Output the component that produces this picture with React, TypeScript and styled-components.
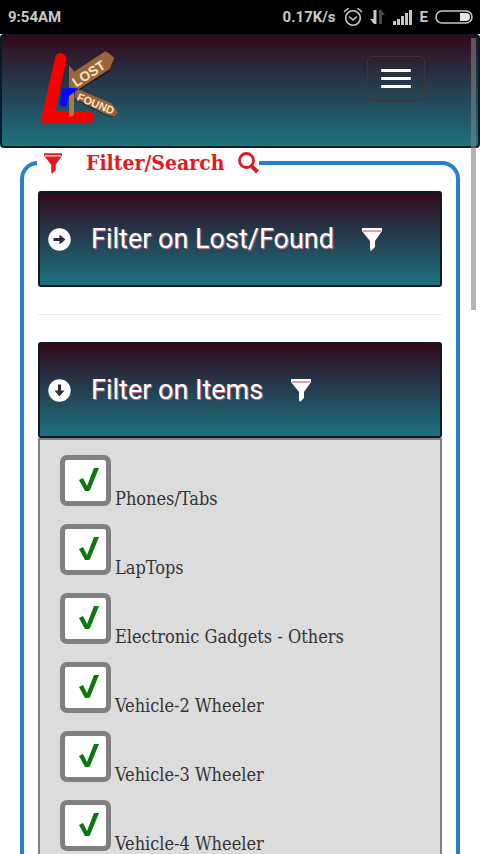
import React, { useState } from "react";
import styled, { createGlobalStyle } from "styled-components";

const serif = `"DejaVu Serif Condensed", "DejaVu Serif", serif`;
const sans = `Roboto, "Liberation Sans", sans-serif`;

const GlobalStyle = createGlobalStyle`
  *, *::before, *::after { box-sizing: border-box; }
  body { margin: 0; background: #fff; }
`;

const Screen = styled.div`
  position: relative;
  display: flex;
  flex-direction: column;
  height: 100vh;
  overflow: hidden;
  font-family: ${serif};
  color: #333;
`;

const StatusBar = styled.header`
  flex: none;
  display: flex;
  align-items: center;
  justify-content: space-between;
  height: 34px;
  padding: 0 7px 0 8px;
  background: #000;
  color: #c8c8c8;
  font: 700 15px/20px ${sans};
`;

const StatusGroup = styled.div`
  display: flex;
  align-items: center;
  gap: 7px;
`;

const ScrollArea = styled.div`
  flex: 1;
  min-height: 0;
  overflow-y: auto;
  scrollbar-width: none;
`;

const ScrollThumb = styled.div`
  position: absolute;
  top: 38px;
  right: 4px;
  width: 5px;
  height: 272px;
  background: rgba(128, 128, 128, 0.6);
`;

const gradient = `linear-gradient(#330a1a, #263547 40%, #1e727f)`;

const NavBar = styled.nav`
  display: flex;
  align-items: flex-start;
  justify-content: space-between;
  height: 114px;
  padding: 15px 53px 0 37px;
  border: 2px solid #071c2a;
  border-radius: 4px;
  background: ${gradient};
`;

const MenuButton = styled.button`
  display: flex;
  flex-direction: column;
  align-items: center;
  justify-content: center;
  gap: 5px;
  width: 58px;
  height: 45px;
  margin-top: 5px;
  padding: 0;
  border: 1px solid #3b3439;
  border-radius: 5px;
  background: transparent;
`;

const MenuBar = styled.span`
  width: 30px;
  height: 3px;
  border-radius: 1px;
  background: #fff;
`;

const Frame = styled.fieldset`
  min-width: 0;
  margin: 1px 20px 0;
  padding: 14px;
  border: 4px solid #2482c8;
  border-bottom-width: 0;
  border-radius: 18px 18px 0 0;
`;

const FrameTitle = styled.legend`
  display: flex;
  align-items: center;
  height: 28px;
  margin-left: -1px;
  padding: 0 0 0 7px;
  color: #e01b1f;
  font-size: 21px;
  font-weight: 700;
  line-height: 28px;
`;

const TitleText = styled.span`
  margin: 0 14px 0 24px;
`;

const PanelButton = styled.button`
  display: flex;
  align-items: center;
  width: 100%;
  height: 96px;
  padding: 0 8px;
  border: 2px solid #0a1a27;
  border-radius: 3px;
  background: ${gradient};
  color: #fff;
  font: 400 27px/36px ${sans};
  text-shadow: 1px 1px 1px #d9788a;
`;

const PanelText = styled.span`
  margin: 0 28px 0 20px;
`;

const Divider = styled.hr`
  height: 1px;
  margin: 27px 0;
  border: 0;
  background: #ececec;
`;

const ItemList = styled.ul`
  display: flex;
  flex-direction: column;
  gap: 18px;
  margin: 0;
  padding: 15px 20px 40px;
  border: 2px solid #808080;
  background: #dcdcdc;
  list-style: none;
`;

const ItemLabel = styled.label`
  display: flex;
  align-items: flex-end;
  gap: 4px;
  font-size: 18px;
  line-height: 14px;
`;

const TickWrap = styled.span`
  position: relative;
  flex: none;
  width: 51px;
  height: 51px;
`;

const TickBox = styled.input`
  appearance: none;
  display: block;
  width: 100%;
  height: 100%;
  margin: 0;
  border: 5px solid #808080;
  border-radius: 7px;
  background: #fff;
`;

const TickMark = styled.svg`
  position: absolute;
  inset: 0;
  display: none;
  pointer-events: none;
  input:checked + & { display: block; }
`;

const Logo = () => (
  <svg width="80" height="74" viewBox="27 18 240 222" role="img" aria-label="Lost and Found">
    <path d="M92 42 53 216H176" fill="none" stroke="#f80000" strokeWidth="35" strokeLinecap="round" strokeLinejoin="miter" />
    <path d="m117 62 15 15v134l-15 5z" fill="#9a663d" />
    <path d="m118 140 110-64 22-44 4 6-18 44-98 60z" fill="#241611" />
    <path d="m130 82 96-63 10 6 17 13-14 35-100 64-10-2z" fill="#9c643a" />
    <path d="m136 129 108 46 20 28-14 12-24-7-92-48z" fill="#966039" />
    <path d="m134 161 92 48 22 6" fill="none" stroke="#3a2419" strokeWidth="3" />
    <path d="M100 174 105 145" fill="none" stroke="#0808f8" strokeWidth="22" strokeLinecap="round" />
    <path d="m96 134 22-4 24 2-22 16-12 12z" fill="#0808f8" stroke="#0808f8" strokeWidth="4" strokeLinejoin="round" />
    <path d="m118 154 14-8v64l-14 5z" fill="#a97c50" />
    <g fill="#ffe5bd" fontFamily="Liberation Sans, sans-serif" fontWeight="700" textAnchor="middle">
      <text fontSize="41" transform="translate(184 98) rotate(-33)">LOST</text>
      <text fontSize="33" transform="translate(193 187) rotate(22)">FOUND</text>
    </g>
  </svg>
);

const StatusIcons = () => (
  <>
    <svg width="20" height="20" viewBox="0 0 20 20" fill="none" stroke="#c8c8c8" strokeWidth="1.6" strokeLinecap="round">
      <circle cx="10" cy="11" r="7.3" />
      <path d="m6.5 10 3.5 3 3.5-3M1.5 4.5 5 1.5M18.5 4.5 15 1.5" />
    </svg>
    <svg width="16" height="18" viewBox="0 0 16 18">
      <path d="M6.5 2v14H4l-4-5h3.5V2z" fill="#c8c8c8" />
      <path d="M9 16V2h2l4 5h-3v9z" fill="#4a4a4a" />
    </svg>
    <svg width="20" height="18" viewBox="0 0 20 18" fill="#c8c8c8">
      <path d="M0 13h3v4H0zM4 11h3v6H4zM8 8h3v9H8zM12 5h3v12h-3zM16 2h3v15h-3z" />
    </svg>
  </>
);

const Battery = () => (
  <svg width="38" height="16" viewBox="0 0 38 16">
    <rect x="1" y="2" width="36" height="12" rx="6" fill="none" stroke="#c8c8c8" strokeWidth="1.6" />
    <path d="M25 4h6a4 4 0 0 1 0 8h-6z" fill="#e4e4e4" />
  </svg>
);

const Funnel = ({ size, line }: { size: number; line: string }) => (
  <svg width={size} height={size + 3} viewBox="0 0 20 23" aria-hidden="true">
    <path d="M0 0h20v3l-7 10v6l-4 4-1-2v-8L0 3z" fill="currentColor" />
    <path d="M1 3h18" stroke={line} strokeWidth="1.2" />
  </svg>
);

const SearchIcon = () => (
  <svg width="21" height="22" viewBox="0 0 21 22" fill="none" stroke="currentColor" aria-hidden="true">
    <circle cx="8.5" cy="8.5" r="7" strokeWidth="2.8" />
    <path d="m13.5 14 6 6" strokeWidth="4" />
  </svg>
);

const CircleArrow = ({ open }: { open: boolean }) => (
  <svg width="23" height="23" viewBox="0 0 23 23" aria-hidden="true">
    <circle cx="11.5" cy="11.5" r="11.2" fill="#fff" />
    <path
      d="M5.5 10h6V6.5l6 5-6 5V13h-6z"
      fill="#302c35"
      transform={open ? "rotate(90 11.5 11.5)" : undefined}
    />
  </svg>
);

const items = [
  "Phones/Tabs",
  "LapTops",
  "Electronic Gadgets - Others",
  "Vehicle-2 Wheeler",
  "Vehicle-3 Wheeler",
  "Vehicle-4 Wheeler",
];

const FilterPanel = ({ title, open, onToggle }: { title: string; open: boolean; onToggle: () => void }) => (
  <PanelButton type="button" aria-expanded={open} onClick={onToggle}>
    <CircleArrow open={open} />
    <PanelText>{title}</PanelText>
    <Funnel size={20} line="#cc6275" />
  </PanelButton>
);

export default function App() {
  const [lostOpen, setLostOpen] = useState(false);
  const [itemsOpen, setItemsOpen] = useState(true);

  return (
    <Screen>
      <GlobalStyle />
      <StatusBar>
        <span>9:54AM</span>
        <StatusGroup>
          <span>0.17K/s</span>
          <StatusIcons />
          <span>E</span>
          <Battery />
        </StatusGroup>
      </StatusBar>
      <ScrollArea>
        <NavBar>
          <Logo />
          <MenuButton type="button" aria-label="Menu">
            <MenuBar />
            <MenuBar />
            <MenuBar />
          </MenuButton>
        </NavBar>
        <Frame>
          <FrameTitle>
            <Funnel size={18} line="#fff" />
            <TitleText>Filter/Search</TitleText>
            <SearchIcon />
          </FrameTitle>
          <FilterPanel title="Filter on Lost/Found" open={lostOpen} onToggle={() => setLostOpen(!lostOpen)} />
          <Divider />
          <FilterPanel title="Filter on Items" open={itemsOpen} onToggle={() => setItemsOpen(!itemsOpen)} />
          {itemsOpen && (
            <ItemList>
              {items.map((item) => (
                <li key={item}>
                  <ItemLabel>
                    <TickWrap>
                      <TickBox type="checkbox" defaultChecked />
                      <TickMark width="51" height="51" viewBox="0 0 51 51">
                        <path d="m19 25 4-2 4 8 7-18h5l-9 22-1 1h-4z" fill="#0b780e" />
                      </TickMark>
                    </TickWrap>
                    {item}
                  </ItemLabel>
                </li>
              ))}
            </ItemList>
          )}
        </Frame>
      </ScrollArea>
      <ScrollThumb />
    </Screen>
  );
}
